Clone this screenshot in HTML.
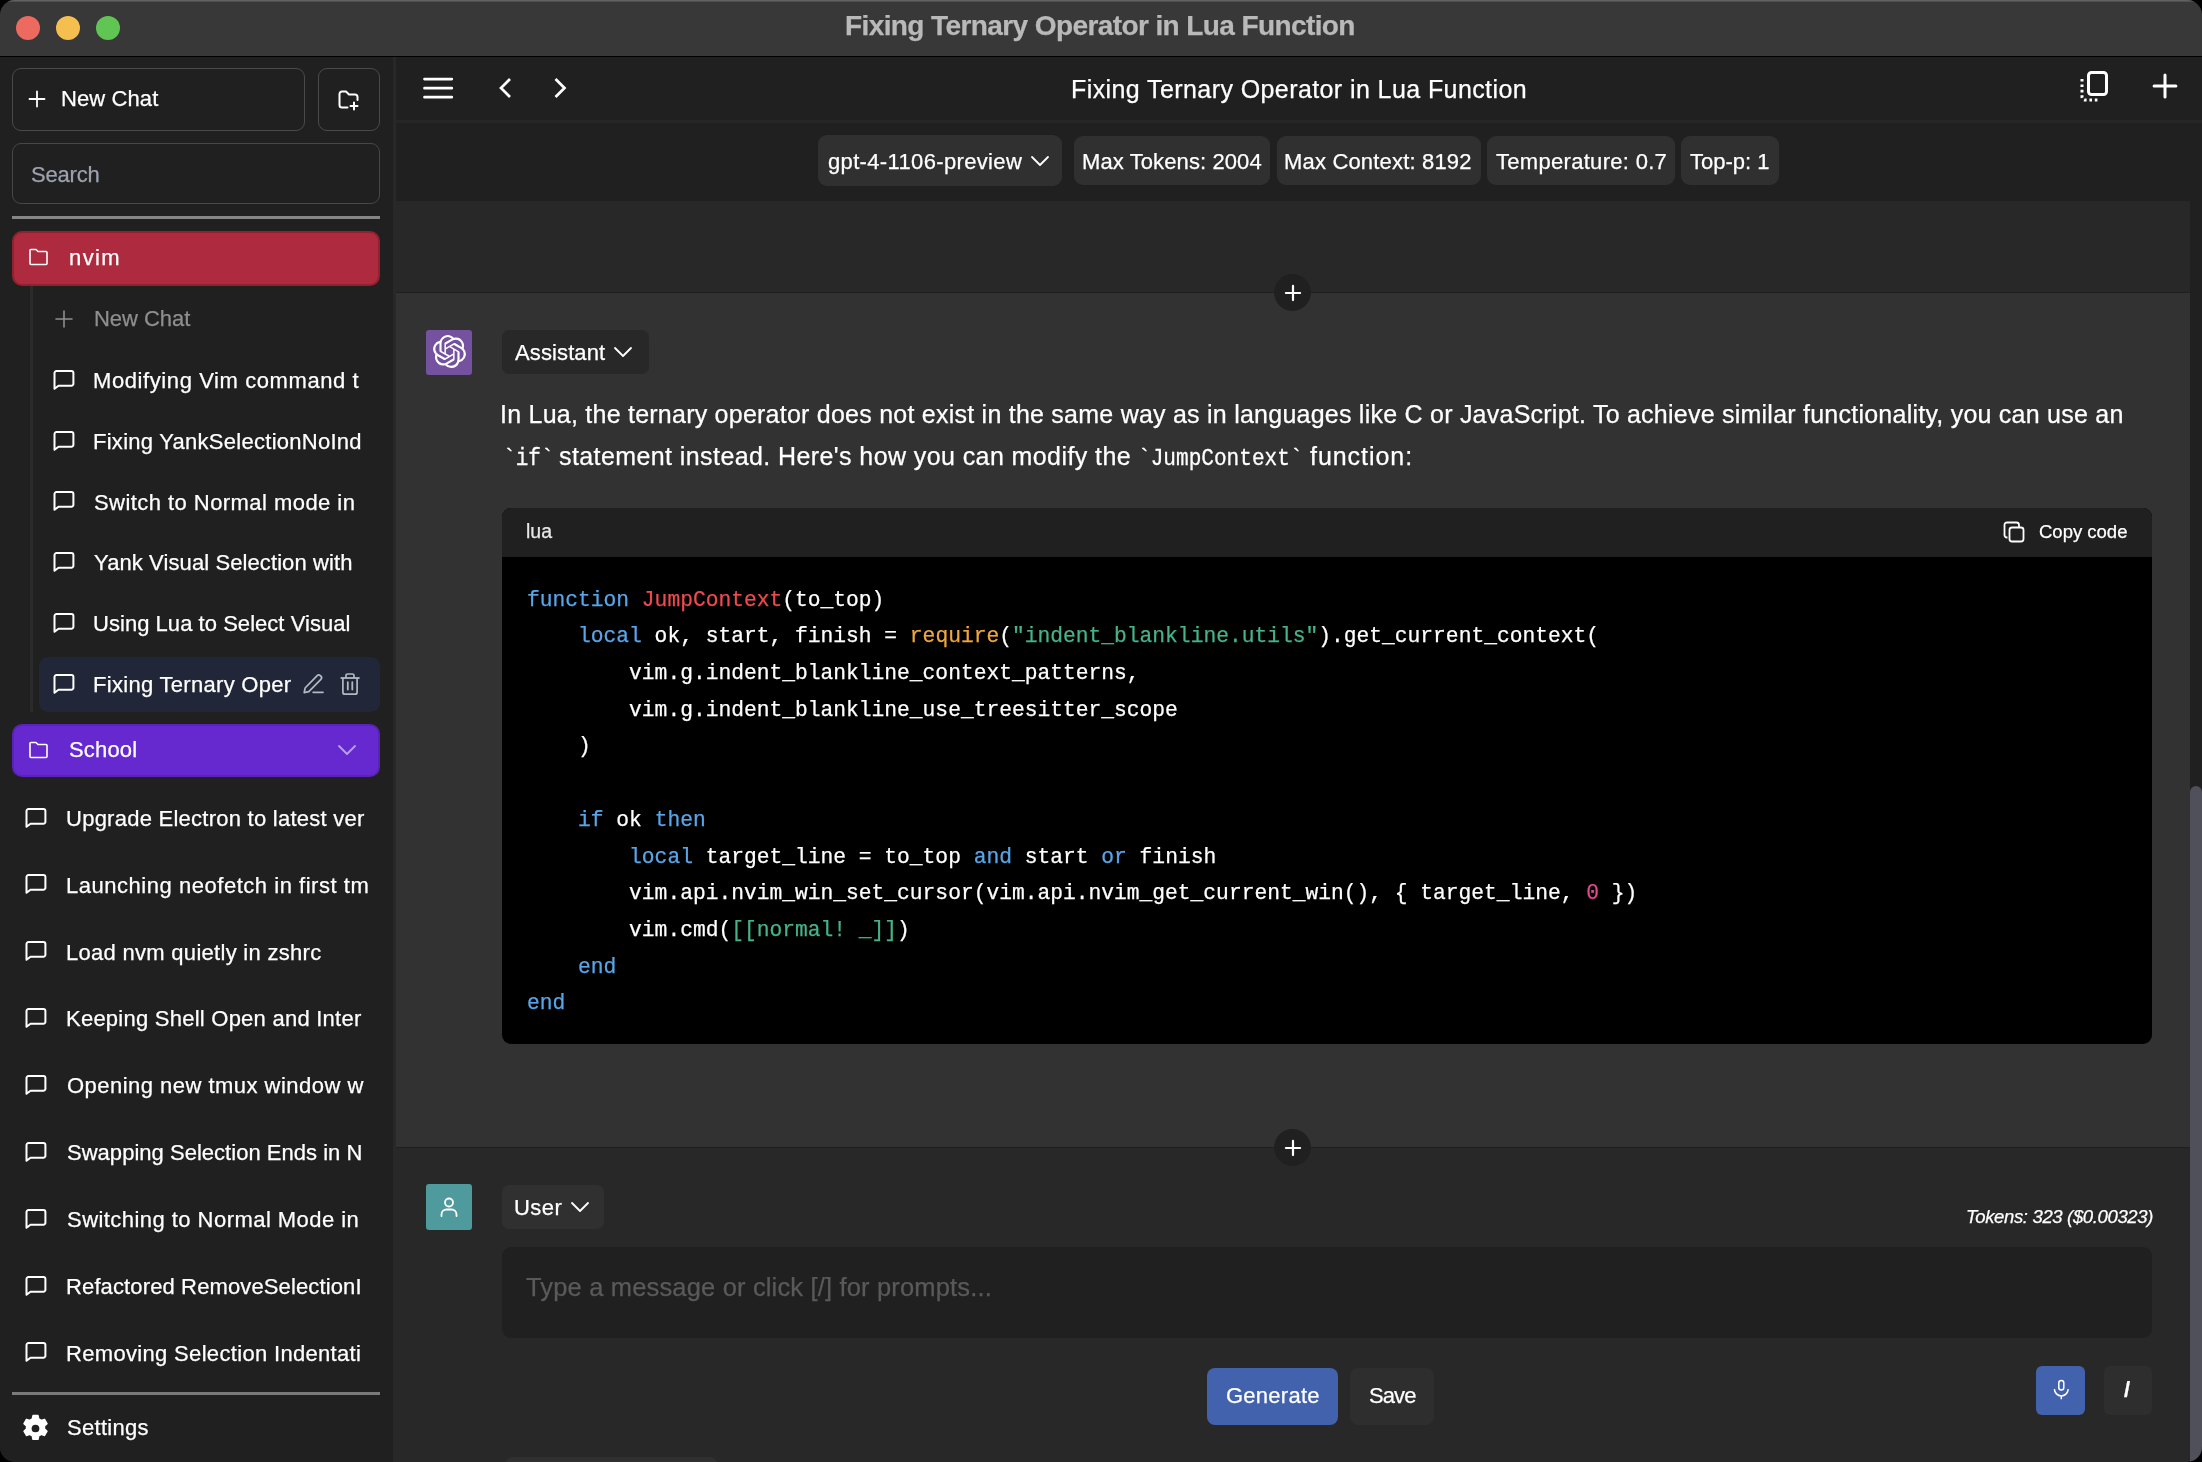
<!DOCTYPE html><html><head><meta charset="utf-8"><style>
html,body{margin:0;padding:0;}
body{width:2202px;height:1462px;position:relative;overflow:hidden;background:#000;}
.a{position:absolute;}
.t{white-space:pre;will-change:transform;-webkit-text-stroke:0.25px currentColor;}
</style></head><body>
<div class="a" style="left:0;top:0;width:2202px;height:1462px;border-radius:15px;overflow:hidden;background:#202020;" id="win">
<div class="a" style="left:0px;top:0px;width:2202px;height:56px;background:#383838;"></div>
<div class="a" style="left:0px;top:0px;width:2202px;height:2px;background:linear-gradient(#6a6a6a,#474747);"></div>
<div class="a" style="left:0px;top:56px;width:2202px;height:1px;background:#000;"></div>
<div class="a" style="left:16px;top:16px;width:24px;height:24px;border-radius:50%;background:#ec6a5f;"></div>
<div class="a" style="left:56px;top:16px;width:24px;height:24px;border-radius:50%;background:#f4bf4f;"></div>
<div class="a" style="left:96px;top:16px;width:24px;height:24px;border-radius:50%;background:#61c554;"></div>
<div class="a t" style="top:12.20px;font-family:'Liberation Sans', sans-serif;font-size:28px;line-height:28px;color:#b9b9b9;font-weight:bold;font-style:normal;letter-spacing:-0.595px;left:845.18px;">Fixing Ternary Operator in Lua Function</div>
<div class="a" style="left:0px;top:57px;width:393px;height:1405px;background:#202020;"></div>
<div class="a" style="left:393px;top:57px;width:3px;height:1405px;background:#282828;"></div>
<div class="a" style="left:12px;top:68px;width:293px;height:63px;border:1px solid #4a4a4a;border-radius:9px;box-sizing:border-box;"></div>
<svg class="a" style="left:28px;top:90px;" width="18" height="18" viewBox="0 0 18 18" fill="none"><path d="M9 1.5V16.5M1.5 9H16.5" stroke="#fff" stroke-width="1.8" stroke-linecap="round"/></svg>
<div class="a t" style="top:88.30px;font-family:'Liberation Sans', sans-serif;font-size:22px;line-height:22px;color:#fff;font-weight:normal;font-style:normal;letter-spacing:0.099px;left:60.84px;">New Chat</div>
<div class="a" style="left:318px;top:68px;width:62px;height:63px;border:1px solid #4a4a4a;border-radius:9px;box-sizing:border-box;"></div>
<svg class="a" style="left:337px;top:89px;" width="24" height="22" viewBox="0 0 24 22" fill="none"><path d="M10.5 18.5H5a2.5 2.5 0 0 1-2.5-2.5V5A2.5 2.5 0 0 1 5 2.5h4l3 3h6a2.5 2.5 0 0 1 2.5 2.5v3" stroke="#fff" stroke-width="2" stroke-linecap="round" stroke-linejoin="round"/><path d="M17 13.5v7M13.5 17h7" stroke="#fff" stroke-width="2" stroke-linecap="round"/></svg>
<div class="a" style="left:12px;top:143px;width:368px;height:61px;border:1px solid #474747;border-radius:9px;box-sizing:border-box;"></div>
<div class="a t" style="top:163.90px;font-family:'Liberation Sans', sans-serif;font-size:22px;line-height:22px;color:#9ca3af;font-weight:normal;font-style:normal;letter-spacing:-0.202px;left:30.81px;">Search</div>
<div class="a" style="left:12px;top:216px;width:368px;height:3px;background:#858585;"></div>
<div class="a" style="left:12px;top:231px;width:368px;height:55px;background:#ae2a3e;border:2px solid #93202f;border-radius:10px;box-sizing:border-box;"></div>
<svg class="a" style="left:28px;top:248px;" width="21" height="19" viewBox="0 0 21 19" fill="none"><path d="M2 15.5V2.5A1 1 0 0 1 3 1.5h5l2 2h8a1 1 0 0 1 1 1v11a1 1 0 0 1-1 1H3a1 1 0 0 1-1-1z" stroke="#fff" stroke-width="1.6" stroke-linejoin="round"/></svg>
<div class="a t" style="top:247.10px;font-family:'Liberation Sans', sans-serif;font-size:22px;line-height:22px;color:#fff;font-weight:normal;font-style:normal;letter-spacing:1.410px;left:69.07px;">nvim</div>
<div class="a" style="left:30px;top:286px;width:3px;height:426px;background:#2b2b2b;"></div>
<svg class="a" style="left:55px;top:310px;" width="18" height="18" viewBox="0 0 18 18" fill="none"><path d="M9 1V17M1 9H17" stroke="#8e8e8e" stroke-width="1.6" stroke-linecap="round"/></svg>
<div class="a t" style="top:307.90px;font-family:'Liberation Sans', sans-serif;font-size:22px;line-height:22px;color:#8f8f8f;font-weight:normal;font-style:normal;letter-spacing:-0.044px;left:93.64px;">New Chat</div>
<div class="a" style="left:39px;top:657px;width:341px;height:55px;background:#212638;border-radius:9px;"></div>
<svg class="a" style="left:52.2px;top:368.8px;" width="24" height="23" viewBox="0 0 24 23" fill="none"><path d="M2.5 19.8V4A2 2 0 0 1 4.5 2H19.4A2 2 0 0 1 21.4 4V14.7A2 2 0 0 1 19.4 16.7H6.5Z" stroke="#fff" stroke-width="2" stroke-linejoin="round"/></svg>
<div class="a t" style="top:370.00px;font-family:'Liberation Sans', sans-serif;font-size:22px;line-height:22px;color:#fff;font-weight:normal;font-style:normal;letter-spacing:0.591px;left:92.84px;">Modifying Vim command t</div>
<svg class="a" style="left:52.2px;top:429.6px;" width="24" height="23" viewBox="0 0 24 23" fill="none"><path d="M2.5 19.8V4A2 2 0 0 1 4.5 2H19.4A2 2 0 0 1 21.4 4V14.7A2 2 0 0 1 19.4 16.7H6.5Z" stroke="#fff" stroke-width="2" stroke-linejoin="round"/></svg>
<div class="a t" style="top:430.80px;font-family:'Liberation Sans', sans-serif;font-size:22px;line-height:22px;color:#fff;font-weight:normal;font-style:normal;letter-spacing:0.269px;left:92.84px;">Fixing YankSelectionNoInd</div>
<svg class="a" style="left:52.2px;top:490.4px;" width="24" height="23" viewBox="0 0 24 23" fill="none"><path d="M2.5 19.8V4A2 2 0 0 1 4.5 2H19.4A2 2 0 0 1 21.4 4V14.7A2 2 0 0 1 19.4 16.7H6.5Z" stroke="#fff" stroke-width="2" stroke-linejoin="round"/></svg>
<div class="a t" style="top:491.60px;font-family:'Liberation Sans', sans-serif;font-size:22px;line-height:22px;color:#fff;font-weight:normal;font-style:normal;letter-spacing:0.445px;left:93.61px;">Switch to Normal mode in</div>
<svg class="a" style="left:52.2px;top:551.1999999999999px;" width="24" height="23" viewBox="0 0 24 23" fill="none"><path d="M2.5 19.8V4A2 2 0 0 1 4.5 2H19.4A2 2 0 0 1 21.4 4V14.7A2 2 0 0 1 19.4 16.7H6.5Z" stroke="#fff" stroke-width="2" stroke-linejoin="round"/></svg>
<div class="a t" style="top:552.40px;font-family:'Liberation Sans', sans-serif;font-size:22px;line-height:22px;color:#fff;font-weight:normal;font-style:normal;letter-spacing:0.096px;left:94.05px;">Yank Visual Selection with</div>
<svg class="a" style="left:52.2px;top:612.0px;" width="24" height="23" viewBox="0 0 24 23" fill="none"><path d="M2.5 19.8V4A2 2 0 0 1 4.5 2H19.4A2 2 0 0 1 21.4 4V14.7A2 2 0 0 1 19.4 16.7H6.5Z" stroke="#fff" stroke-width="2" stroke-linejoin="round"/></svg>
<div class="a t" style="top:613.20px;font-family:'Liberation Sans', sans-serif;font-size:22px;line-height:22px;color:#fff;font-weight:normal;font-style:normal;letter-spacing:0.039px;left:92.95px;">Using Lua to Select Visual</div>
<svg class="a" style="left:52.2px;top:672.8000000000001px;" width="24" height="23" viewBox="0 0 24 23" fill="none"><path d="M2.5 19.8V4A2 2 0 0 1 4.5 2H19.4A2 2 0 0 1 21.4 4V14.7A2 2 0 0 1 19.4 16.7H6.5Z" stroke="#fff" stroke-width="2" stroke-linejoin="round"/></svg>
<div class="a t" style="top:674.00px;font-family:'Liberation Sans', sans-serif;font-size:22px;line-height:22px;color:#fff;font-weight:normal;font-style:normal;letter-spacing:0.298px;left:92.84px;">Fixing Ternary Oper</div>
<svg class="a" style="left:301px;top:671px;" width="26" height="26" viewBox="0 0 26 26" fill="none"><path d="M3.2 21.6l.9-4.6L16.2 4.6a2.2 2.2 0 0 1 3.1 0l.6.6a2.2 2.2 0 0 1 0 3.1L7.8 20.6z" stroke="#b4b8c2" stroke-width="1.7" stroke-linejoin="round"/><path d="M12.2 21.3H22" stroke="#b4b8c2" stroke-width="1.8" stroke-linecap="round"/></svg>
<svg class="a" style="left:338px;top:671px;" width="24" height="26" viewBox="0 0 24 26" fill="none"><path d="M2.6 7H21.6" stroke="#b4b8c2" stroke-width="1.8"/><path d="M8 7V4.6A1.6 1.6 0 0 1 9.6 3h4.8A1.6 1.6 0 0 1 16 4.6V7M4.9 7V21.2a2 2 0 0 0 2 2h10.2a2 2 0 0 0 2-2V7" stroke="#b4b8c2" stroke-width="1.7" stroke-linejoin="round"/><path d="M9.8 11.2V18.6M14.3 11.2V18.6" stroke="#b4b8c2" stroke-width="1.8" stroke-linecap="round"/></svg>
<div class="a" style="left:12px;top:724px;width:368px;height:53px;background:#6629d0;border:2px solid #5a22b8;border-radius:10px;box-sizing:border-box;"></div>
<svg class="a" style="left:28px;top:741px;" width="21" height="19" viewBox="0 0 21 19" fill="none"><path d="M2 15.5V2.5A1 1 0 0 1 3 1.5h5l2 2h8a1 1 0 0 1 1 1v11a1 1 0 0 1-1 1H3a1 1 0 0 1-1-1z" stroke="#fff" stroke-width="1.6" stroke-linejoin="round"/></svg>
<div class="a t" style="top:739.30px;font-family:'Liberation Sans', sans-serif;font-size:22px;line-height:22px;color:#fff;font-weight:normal;font-style:normal;letter-spacing:0.162px;left:69.01px;">School</div>
<svg class="a" style="left:337px;top:743px;" width="20" height="14" viewBox="0 0 20 14" fill="none"><path d="M2 3l8 8 8-8" stroke="#b9a0ee" stroke-width="1.8" stroke-linecap="round" stroke-linejoin="round"/></svg>
<svg class="a" style="left:24.4px;top:806.6px;" width="24" height="23" viewBox="0 0 24 23" fill="none"><path d="M2.5 19.8V4A2 2 0 0 1 4.5 2H19.4A2 2 0 0 1 21.4 4V14.7A2 2 0 0 1 19.4 16.7H6.5Z" stroke="#fff" stroke-width="2" stroke-linejoin="round"/></svg>
<div class="a t" style="top:807.80px;font-family:'Liberation Sans', sans-serif;font-size:22px;line-height:22px;color:#fff;font-weight:normal;font-style:normal;letter-spacing:0.253px;left:66.25px;">Upgrade Electron to latest ver</div>
<svg class="a" style="left:24.4px;top:873.45px;" width="24" height="23" viewBox="0 0 24 23" fill="none"><path d="M2.5 19.8V4A2 2 0 0 1 4.5 2H19.4A2 2 0 0 1 21.4 4V14.7A2 2 0 0 1 19.4 16.7H6.5Z" stroke="#fff" stroke-width="2" stroke-linejoin="round"/></svg>
<div class="a t" style="top:874.65px;font-family:'Liberation Sans', sans-serif;font-size:22px;line-height:22px;color:#fff;font-weight:normal;font-style:normal;letter-spacing:0.530px;left:66.14px;">Launching neofetch in first tm</div>
<svg class="a" style="left:24.4px;top:940.3000000000001px;" width="24" height="23" viewBox="0 0 24 23" fill="none"><path d="M2.5 19.8V4A2 2 0 0 1 4.5 2H19.4A2 2 0 0 1 21.4 4V14.7A2 2 0 0 1 19.4 16.7H6.5Z" stroke="#fff" stroke-width="2" stroke-linejoin="round"/></svg>
<div class="a t" style="top:941.50px;font-family:'Liberation Sans', sans-serif;font-size:22px;line-height:22px;color:#fff;font-weight:normal;font-style:normal;letter-spacing:0.289px;left:66.14px;">Load nvm quietly in zshrc</div>
<svg class="a" style="left:24.4px;top:1007.15px;" width="24" height="23" viewBox="0 0 24 23" fill="none"><path d="M2.5 19.8V4A2 2 0 0 1 4.5 2H19.4A2 2 0 0 1 21.4 4V14.7A2 2 0 0 1 19.4 16.7H6.5Z" stroke="#fff" stroke-width="2" stroke-linejoin="round"/></svg>
<div class="a t" style="top:1008.35px;font-family:'Liberation Sans', sans-serif;font-size:22px;line-height:22px;color:#fff;font-weight:normal;font-style:normal;letter-spacing:0.243px;left:66.14px;">Keeping Shell Open and Inter</div>
<svg class="a" style="left:24.4px;top:1074.0px;" width="24" height="23" viewBox="0 0 24 23" fill="none"><path d="M2.5 19.8V4A2 2 0 0 1 4.5 2H19.4A2 2 0 0 1 21.4 4V14.7A2 2 0 0 1 19.4 16.7H6.5Z" stroke="#fff" stroke-width="2" stroke-linejoin="round"/></svg>
<div class="a t" style="top:1075.20px;font-family:'Liberation Sans', sans-serif;font-size:22px;line-height:22px;color:#fff;font-weight:normal;font-style:normal;letter-spacing:0.474px;left:66.91px;">Opening new tmux window w</div>
<svg class="a" style="left:24.4px;top:1140.85px;" width="24" height="23" viewBox="0 0 24 23" fill="none"><path d="M2.5 19.8V4A2 2 0 0 1 4.5 2H19.4A2 2 0 0 1 21.4 4V14.7A2 2 0 0 1 19.4 16.7H6.5Z" stroke="#fff" stroke-width="2" stroke-linejoin="round"/></svg>
<div class="a t" style="top:1142.05px;font-family:'Liberation Sans', sans-serif;font-size:22px;line-height:22px;color:#fff;font-weight:normal;font-style:normal;letter-spacing:0.024px;left:66.91px;">Swapping Selection Ends in N</div>
<svg class="a" style="left:24.4px;top:1207.6999999999998px;" width="24" height="23" viewBox="0 0 24 23" fill="none"><path d="M2.5 19.8V4A2 2 0 0 1 4.5 2H19.4A2 2 0 0 1 21.4 4V14.7A2 2 0 0 1 19.4 16.7H6.5Z" stroke="#fff" stroke-width="2" stroke-linejoin="round"/></svg>
<div class="a t" style="top:1208.90px;font-family:'Liberation Sans', sans-serif;font-size:22px;line-height:22px;color:#fff;font-weight:normal;font-style:normal;letter-spacing:0.453px;left:66.91px;">Switching to Normal Mode in</div>
<svg class="a" style="left:24.4px;top:1274.5499999999997px;" width="24" height="23" viewBox="0 0 24 23" fill="none"><path d="M2.5 19.8V4A2 2 0 0 1 4.5 2H19.4A2 2 0 0 1 21.4 4V14.7A2 2 0 0 1 19.4 16.7H6.5Z" stroke="#fff" stroke-width="2" stroke-linejoin="round"/></svg>
<div class="a t" style="top:1275.75px;font-family:'Liberation Sans', sans-serif;font-size:22px;line-height:22px;color:#fff;font-weight:normal;font-style:normal;letter-spacing:0.126px;left:66.14px;">Refactored RemoveSelectionI</div>
<svg class="a" style="left:24.4px;top:1341.3999999999999px;" width="24" height="23" viewBox="0 0 24 23" fill="none"><path d="M2.5 19.8V4A2 2 0 0 1 4.5 2H19.4A2 2 0 0 1 21.4 4V14.7A2 2 0 0 1 19.4 16.7H6.5Z" stroke="#fff" stroke-width="2" stroke-linejoin="round"/></svg>
<div class="a t" style="top:1342.60px;font-family:'Liberation Sans', sans-serif;font-size:22px;line-height:22px;color:#fff;font-weight:normal;font-style:normal;letter-spacing:0.325px;left:66.14px;">Removing Selection Indentati</div>
<div class="a" style="left:12px;top:1392px;width:368px;height:3px;background:#7a7a7a;"></div>
<svg class="a" style="left:21.3px;top:1414.3px;" width="29" height="29" viewBox="0 0 27 27" fill="none"><path fill="#fff" stroke="#fff" stroke-width="1.4" stroke-linejoin="round" d="M11.2 1.5h4.6l.7 3.2a9 9 0 0 1 2.3 1.3l3.1-1 2.3 4-2.4 2.2a9 9 0 0 1 0 2.6l2.4 2.2-2.3 4-3.1-1a9 9 0 0 1-2.3 1.3l-.7 3.2h-4.6l-.7-3.2a9 9 0 0 1-2.3-1.3l-3.1 1-2.3-4 2.4-2.2a9 9 0 0 1 0-2.6L2.8 9l2.3-4 3.1 1a9 9 0 0 1 2.3-1.3z"/><circle cx="13.5" cy="13.5" r="3.6" fill="#202020"/></svg>
<div class="a t" style="top:1416.70px;font-family:'Liberation Sans', sans-serif;font-size:22px;line-height:22px;color:#fff;font-weight:normal;font-style:normal;letter-spacing:0.304px;left:66.61px;">Settings</div>
<div class="a" style="left:396px;top:57px;width:1806px;height:63px;background:#202020;"></div>
<div class="a" style="left:396px;top:120px;width:1806px;height:3px;background:#262626;"></div>
<div class="a" style="left:396px;top:123px;width:1806px;height:78px;background:#202020;"></div>
<div class="a" style="left:396px;top:201px;width:1794px;height:91px;background:#282828;"></div>
<div class="a" style="left:396px;top:292px;width:1794px;height:1px;background:#1f1f1f;"></div>
<div class="a" style="left:396px;top:293px;width:1794px;height:854px;background:#323232;"></div>
<div class="a" style="left:396px;top:1147px;width:1794px;height:1px;background:#1f1f1f;"></div>
<div class="a" style="left:396px;top:1148px;width:1794px;height:314px;background:#282828;"></div>
<div class="a" style="left:2190px;top:201px;width:12px;height:1261px;background:#202020;"></div>
<div class="a" style="left:2190px;top:786px;width:12px;height:684px;background:#50505a;border-radius:6px;"></div>
<svg class="a" style="left:421px;top:76px;" width="34" height="24" viewBox="0 0 34 24" fill="none"><path d="M3.5 3.1H30.8M3.5 12.2H30.8M3.5 21.2H30.8" stroke="#fff" stroke-width="2.7" stroke-linecap="round"/></svg>
<svg class="a" style="left:495px;top:74px;" width="22" height="28" viewBox="0 0 22 28" fill="none"><path d="M15 5L6 14l9 9" stroke="#fff" stroke-width="2.7" stroke-linejoin="miter"/></svg>
<svg class="a" style="left:550px;top:74px;" width="22" height="28" viewBox="0 0 22 28" fill="none"><path d="M5.5 5l9 9-9 9" stroke="#fff" stroke-width="2.7" stroke-linejoin="miter"/></svg>
<div class="a t" style="top:76.75px;font-family:'Liberation Sans', sans-serif;font-size:25px;line-height:25px;color:#fff;font-weight:normal;font-style:normal;letter-spacing:0.411px;left:1071.00px;">Fixing Ternary Operator in Lua Function</div>
<svg class="a" style="left:2078px;top:68px;" width="34" height="36" viewBox="0 0 34 36" fill="none"><rect x="10.5" y="4.5" width="18" height="22" rx="3" stroke="#fff" stroke-width="3"/><path d="M4 11v18a3 3 0 0 0 3 3h14" stroke="#fff" stroke-width="3" stroke-dasharray="2.6 2.8"/></svg>
<svg class="a" style="left:2150.2px;top:71.1px;" width="30" height="30" viewBox="0 0 30 30" fill="none"><path d="M15 4.1V25.9M4.1 15H25.9" stroke="#fff" stroke-width="3" stroke-linecap="round"/></svg>
<div class="a" style="left:818px;top:135px;width:244px;height:51px;background:#303030;border-radius:9px;"></div>
<div class="a t" style="top:150.50px;font-family:'Liberation Sans', sans-serif;font-size:22px;line-height:22px;color:#fff;font-weight:normal;font-style:normal;letter-spacing:0.346px;left:827.62px;">gpt-4-1106-preview</div>
<div class="a" style="left:1074px;top:136px;width:196px;height:48.5px;background:#303030;border-radius:9px;"></div>
<div class="a t" style="top:150.50px;font-family:'Liberation Sans', sans-serif;font-size:22px;line-height:22px;color:#fff;font-weight:normal;font-style:normal;letter-spacing:0.102px;left:1081.84px;">Max Tokens: 2004</div>
<div class="a" style="left:1277px;top:136px;width:204px;height:49px;background:#303030;border-radius:9px;"></div>
<div class="a t" style="top:150.50px;font-family:'Liberation Sans', sans-serif;font-size:22px;line-height:22px;color:#fff;font-weight:normal;font-style:normal;letter-spacing:0.179px;left:1284.24px;">Max Context: 8192</div>
<div class="a" style="left:1487px;top:136px;width:188px;height:49px;background:#303030;border-radius:9px;"></div>
<div class="a t" style="top:150.50px;font-family:'Liberation Sans', sans-serif;font-size:22px;line-height:22px;color:#fff;font-weight:normal;font-style:normal;letter-spacing:0.301px;left:1495.76px;">Temperature: 0.7</div>
<div class="a" style="left:1681px;top:136px;width:98px;height:49px;background:#303030;border-radius:9px;"></div>
<div class="a t" style="top:150.50px;font-family:'Liberation Sans', sans-serif;font-size:22px;line-height:22px;color:#fff;font-weight:normal;font-style:normal;letter-spacing:-0.013px;left:1689.86px;">Top-p: 1</div>
<svg class="a" style="left:1030px;top:154px;" width="20" height="14" viewBox="0 0 20 14" fill="none"><path d="M2 3l8 8 8-8" stroke="#fff" stroke-width="1.8" stroke-linecap="round" stroke-linejoin="round"/></svg>
<div class="a" style="left:1274.0px;top:274.3px;width:37px;height:37px;border-radius:50%;background:#202020;"></div>
<svg class="a" style="left:1282.5px;top:282.8px;" width="20" height="20" viewBox="0 0 20 20" fill="none"><path d="M10 2.9V17.1M2.9 10H17.1" stroke="#fff" stroke-width="2.2" stroke-linecap="round"/></svg>
<div class="a" style="left:1274.0px;top:1129.1px;width:37px;height:37px;border-radius:50%;background:#202020;"></div>
<svg class="a" style="left:1282.5px;top:1137.6px;" width="20" height="20" viewBox="0 0 20 20" fill="none"><path d="M10 2.9V17.1M2.9 10H17.1" stroke="#fff" stroke-width="2.2" stroke-linecap="round"/></svg>
<div class="a" style="left:426px;top:330px;width:46px;height:45px;background:#7552a0;border-radius:3px;"></div>
<svg class="a" style="left:432.5px;top:335.3px;" width="33" height="33" viewBox="0 0 24 24" fill="none"><path fill="#fff" d="M22.282 9.821a5.985 5.985 0 0 0-.516-4.91 6.046 6.046 0 0 0-6.51-2.9A6.065 6.065 0 0 0 4.981 4.18a5.985 5.985 0 0 0-3.998 2.9 6.046 6.046 0 0 0 .743 7.097 5.98 5.98 0 0 0 .51 4.911 6.051 6.051 0 0 0 6.515 2.9A5.985 5.985 0 0 0 13.26 24a6.056 6.056 0 0 0 5.772-4.206 5.99 5.99 0 0 0 3.997-2.9 6.056 6.056 0 0 0-.747-7.073zM13.26 22.43a4.476 4.476 0 0 1-2.876-1.04l.141-.081 4.779-2.758a.795.795 0 0 0 .392-.681v-6.737l2.02 1.168a.071.071 0 0 1 .038.052v5.583a4.504 4.504 0 0 1-4.494 4.494zM3.6 18.304a4.47 4.47 0 0 1-.535-3.014l.142.085 4.783 2.759a.771.771 0 0 0 .78 0l5.843-3.369v2.332a.08.08 0 0 1-.033.062L9.74 19.95a4.5 4.5 0 0 1-6.14-1.646zM2.34 7.896a4.485 4.485 0 0 1 2.366-1.973V11.6a.766.766 0 0 0 .388.676l5.815 3.355-2.02 1.168a.076.076 0 0 1-.071 0l-4.83-2.786A4.504 4.504 0 0 1 2.34 7.872zm16.597 3.855l-5.833-3.387L15.119 7.2a.076.076 0 0 1 .071 0l4.83 2.791a4.494 4.494 0 0 1-.676 8.105v-5.678a.79.79 0 0 0-.407-.667zm2.01-3.023l-.141-.085-4.774-2.782a.776.776 0 0 0-.785 0L9.409 9.23V6.897a.066.066 0 0 1 .028-.061l4.83-2.787a4.5 4.5 0 0 1 6.68 4.66zm-12.64 4.135l-2.02-1.164a.08.08 0 0 1-.038-.057V6.075a4.5 4.5 0 0 1 7.375-3.453l-.142.08L8.704 5.46a.795.795 0 0 0-.393.681zm1.097-2.365l2.602-1.5 2.607 1.5v2.999l-2.597 1.5-2.607-1.5z"/></svg>
<div class="a" style="left:502px;top:330px;width:147px;height:44px;background:#282828;border-radius:7px;"></div>
<div class="a t" style="top:341.60px;font-family:'Liberation Sans', sans-serif;font-size:22px;line-height:22px;color:#fff;font-weight:normal;font-style:normal;letter-spacing:0.113px;left:515.00px;">Assistant</div>
<svg class="a" style="left:613px;top:345px;" width="20" height="14" viewBox="0 0 20 14" fill="none"><path d="M2 3l8 8 8-8" stroke="#fff" stroke-width="1.8" stroke-linecap="round" stroke-linejoin="round"/></svg>
<div class="a t" style="top:401.75px;font-family:'Liberation Sans', sans-serif;font-size:25px;line-height:25px;color:#fff;font-weight:normal;font-style:normal;letter-spacing:0.238px;left:500.35px;">In Lua, the ternary operator does not exist in the same way as in languages like C or JavaScript. To achieve similar functionality, you can use an</div>
<div class="a t" style="top:448.76px;font-family:'Liberation Mono', monospace;font-size:21.1px;line-height:21.1px;color:#fff;font-weight:normal;font-style:normal;left:502.60px;transform:scaleY(1.1);transform-origin:0 80%;">`if`</div>
<div class="a t" style="top:443.55px;font-family:'Liberation Sans', sans-serif;font-size:25px;line-height:25px;color:#fff;font-weight:normal;font-style:normal;letter-spacing:0.411px;left:559.35px;">statement instead. Here's how you can modify the</div>
<div class="a t" style="top:448.76px;font-family:'Liberation Mono', monospace;font-size:21.1px;line-height:21.1px;color:#fff;font-weight:normal;font-style:normal;left:1138.20px;transform:scaleY(1.1);transform-origin:0 80%;">`JumpContext`</div>
<div class="a t" style="top:443.55px;font-family:'Liberation Sans', sans-serif;font-size:25px;line-height:25px;color:#fff;font-weight:normal;font-style:normal;letter-spacing:0.953px;left:1310.42px;">function:</div>
<div class="a" style="left:502px;top:508px;width:1650px;height:536px;background:#000;border-radius:9px;overflow:hidden;"></div>
<div class="a" style="left:502px;top:508px;width:1650px;height:49px;background:#202020;border-radius:9px 9px 0 0;"></div>
<div class="a t" style="top:522.42px;font-family:'Liberation Sans', sans-serif;font-size:19.5px;line-height:19.5px;color:#e8e8e8;font-weight:normal;font-style:normal;left:525.73px;">lua</div>
<svg class="a" style="left:2003px;top:521px;" width="23" height="23" viewBox="0 0 23 23" fill="none"><rect x="6.5" y="6.5" width="14" height="14" rx="2.5" stroke="#fff" stroke-width="1.8"/><path d="M4.5 16.5h-0.5a2.5 2.5 0 0 1-2.5-2.5V4a2.5 2.5 0 0 1 2.5-2.5h9.5a2.5 2.5 0 0 1 2.5 2.5v2.5" stroke="#fff" stroke-width="1.8"/></svg>
<div class="a t" style="top:523.27px;font-family:'Liberation Sans', sans-serif;font-size:18.5px;line-height:18.5px;color:#fff;font-weight:normal;font-style:normal;left:2038.58px;">Copy code</div>
<div class="a t" style="top:589.63px;font-family:'Liberation Mono', monospace;font-size:21.28px;line-height:21.28px;color:#ffffff;font-weight:normal;font-style:normal;left:527.00px;"><span style="color:#58a6ea">function </span><span style="color:#ee4a50">JumpContext</span>(to_top)</div>
<div class="a t" style="top:626.33px;font-family:'Liberation Mono', monospace;font-size:21.28px;line-height:21.28px;color:#ffffff;font-weight:normal;font-style:normal;left:527.00px;">    <span style="color:#58a6ea">local</span> ok, start, finish = <span style="color:#f0a63f">require</span>(<span style="color:#46b38a">"indent_blankline.utils"</span>).get_current_context(</div>
<div class="a t" style="top:663.03px;font-family:'Liberation Mono', monospace;font-size:21.28px;line-height:21.28px;color:#ffffff;font-weight:normal;font-style:normal;left:527.00px;">        vim.g.indent_blankline_context_patterns,</div>
<div class="a t" style="top:699.73px;font-family:'Liberation Mono', monospace;font-size:21.28px;line-height:21.28px;color:#ffffff;font-weight:normal;font-style:normal;left:527.00px;">        vim.g.indent_blankline_use_treesitter_scope</div>
<div class="a t" style="top:736.43px;font-family:'Liberation Mono', monospace;font-size:21.28px;line-height:21.28px;color:#ffffff;font-weight:normal;font-style:normal;left:527.00px;">    )</div>
<div class="a t" style="top:773.13px;font-family:'Liberation Mono', monospace;font-size:21.28px;line-height:21.28px;color:#ffffff;font-weight:normal;font-style:normal;left:527.00px;"></div>
<div class="a t" style="top:809.83px;font-family:'Liberation Mono', monospace;font-size:21.28px;line-height:21.28px;color:#ffffff;font-weight:normal;font-style:normal;left:527.00px;">    <span style="color:#58a6ea">if</span> ok <span style="color:#58a6ea">then</span></div>
<div class="a t" style="top:846.53px;font-family:'Liberation Mono', monospace;font-size:21.28px;line-height:21.28px;color:#ffffff;font-weight:normal;font-style:normal;left:527.00px;">        <span style="color:#58a6ea">local</span> target_line = to_top <span style="color:#58a6ea">and</span> start <span style="color:#58a6ea">or</span> finish</div>
<div class="a t" style="top:883.23px;font-family:'Liberation Mono', monospace;font-size:21.28px;line-height:21.28px;color:#ffffff;font-weight:normal;font-style:normal;left:527.00px;">        vim.api.nvim_win_set_cursor(vim.api.nvim_get_current_win(), { target_line, <span style="color:#df4b8e">0</span> })</div>
<div class="a t" style="top:919.93px;font-family:'Liberation Mono', monospace;font-size:21.28px;line-height:21.28px;color:#ffffff;font-weight:normal;font-style:normal;left:527.00px;">        vim.cmd(<span style="color:#46b38a">[[normal! _]]</span>)</div>
<div class="a t" style="top:956.63px;font-family:'Liberation Mono', monospace;font-size:21.28px;line-height:21.28px;color:#ffffff;font-weight:normal;font-style:normal;left:527.00px;">    <span style="color:#58a6ea">end</span></div>
<div class="a t" style="top:993.33px;font-family:'Liberation Mono', monospace;font-size:21.28px;line-height:21.28px;color:#ffffff;font-weight:normal;font-style:normal;left:527.00px;"><span style="color:#58a6ea">end</span></div>
<div class="a" style="left:426px;top:1184px;width:46px;height:46px;background:#4f9a9c;border-radius:3px;"></div>
<svg class="a" style="left:437px;top:1195px;" width="24" height="24" viewBox="0 0 24 24" fill="none"><circle cx="12" cy="7.5" r="4" stroke="#fff" stroke-width="1.8"/><path d="M4.5 21v-1.5A5 5 0 0 1 9.5 14.5h5a5 5 0 0 1 5 5V21" stroke="#fff" stroke-width="1.8" stroke-linecap="round"/></svg>
<div class="a" style="left:502px;top:1185px;width:102px;height:44px;background:#303030;border-radius:7px;"></div>
<div class="a t" style="top:1197.30px;font-family:'Liberation Sans', sans-serif;font-size:22px;line-height:22px;color:#fff;font-weight:normal;font-style:normal;letter-spacing:0.487px;left:514.15px;">User</div>
<svg class="a" style="left:570px;top:1200px;" width="20" height="14" viewBox="0 0 20 14" fill="none"><path d="M2 3l8 8 8-8" stroke="#fff" stroke-width="1.8" stroke-linecap="round" stroke-linejoin="round"/></svg>
<div class="a t" style="top:1207.58px;font-family:'Liberation Sans', sans-serif;font-size:18.5px;line-height:18.5px;color:#fff;font-weight:normal;font-style:italic;letter-spacing:-0.349px;left:1965.93px;">Tokens: 323 ($0.00323)</div>
<div class="a" style="left:502px;top:1247px;width:1650px;height:91px;background:#202020;border-radius:9px;"></div>
<div class="a t" style="top:1275.33px;font-family:'Liberation Sans', sans-serif;font-size:25.5px;line-height:25.5px;color:#5a5a5a;font-weight:normal;font-style:normal;letter-spacing:0.163px;left:526.49px;">Type a message or click [/] for prompts...</div>
<div class="a" style="left:1207px;top:1368px;width:131px;height:57px;background:#4262ae;border-radius:8px;"></div>
<div class="a t" style="top:1385.30px;font-family:'Liberation Sans', sans-serif;font-size:22px;line-height:22px;color:#fff;font-weight:normal;font-style:normal;letter-spacing:0.250px;left:1225.50px;">Generate</div>
<div class="a" style="left:1350px;top:1368px;width:84px;height:57px;background:#2e2e2e;border-radius:8px;"></div>
<div class="a t" style="top:1385.30px;font-family:'Liberation Sans', sans-serif;font-size:22px;line-height:22px;color:#fff;font-weight:normal;font-style:normal;letter-spacing:-0.893px;left:1368.81px;">Save</div>
<div class="a" style="left:2036px;top:1366px;width:49px;height:49px;background:#4262ae;border-radius:6px;"></div>
<svg class="a" style="left:2048px;top:1376px;" width="26" height="26" viewBox="0 0 26 26" fill="none"><rect x="10.8" y="4.5" width="5" height="9.5" rx="2.5" stroke="#fff" stroke-width="1.5"/><path d="M6.4 13a6.9 6.9 0 0 0 13.8 0M13.3 19.9V23.2" stroke="#fff" stroke-width="1.5"/></svg>
<div class="a" style="left:2104px;top:1366px;width:48px;height:49px;background:#2e2e2e;border-radius:6px;"></div>
<div class="a t" style="top:1379.30px;font-family:'Liberation Sans', sans-serif;font-size:22px;line-height:22px;color:#fff;font-weight:bold;font-style:normal;left:2123.78px;">/</div>
<div class="a" style="left:506px;top:1457px;width:211px;height:13px;background:#303030;border-radius:10px;"></div>
</div>
</body></html>
